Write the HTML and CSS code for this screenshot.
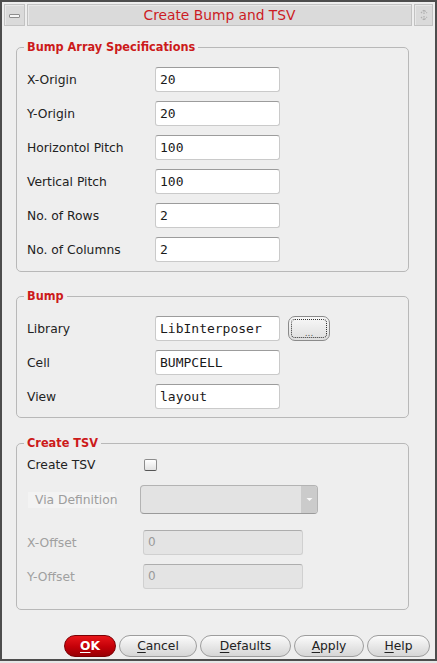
FILE: index.html
```html
<!DOCTYPE html>
<html>
<head>
<meta charset="utf-8">
<link rel="stylesheet" href="styles.css">
</head>
<body>
<div class="window">
  <div class="titlebar">
    <div class="tb-btn tb-left"><span class="min-icon"></span></div>
    <div class="tb-title">Create Bump and TSV</div>
    <div class="tb-btn tb-right">
      <svg width="12" height="14" viewBox="0 0 12 14"><path d="M3 5 L6 2 L9 5 M6 2 V6 M3 9 L6 12 L9 9 M6 12 V8" fill="none" stroke="#b0b0b0" stroke-width="1.2" stroke-dasharray="1.5 1"/></svg>
    </div>
  </div>
  <div class="content">
    <fieldset class="group g1">
      <legend>Bump Array Specifications</legend>
      <div class="form">
        <span class="lbl">X-Origin</span><div class="field">20</div>
        <span class="lbl">Y-Origin</span><div class="field">20</div>
        <span class="lbl">Horizontol Pitch</span><div class="field">100</div>
        <span class="lbl">Vertical Pitch</span><div class="field">100</div>
        <span class="lbl">No. of Rows</span><div class="field">2</div>
        <span class="lbl">No. of Columns</span><div class="field">2</div>
      </div>
    </fieldset>
    <fieldset class="group g2">
      <legend>Bump</legend>
      <div class="form form3">
        <span class="lbl">Library</span><div class="field">LibInterposer</div><button class="browse"><span>...</span></button>
        <span class="lbl">Cell</span><div class="field">BUMPCELL</div><span></span>
        <span class="lbl">View</span><div class="field">layout</div><span></span>
      </div>
    </fieldset>
    <fieldset class="group g3">
      <legend>Create TSV</legend>
      <div class="row r1"><span class="lbl lbl-tsv">Create TSV</span><span class="check"></span></div>
      <div class="row r2"><span class="lbl via">Via Definition</span><div class="combo"><span class="combo-arrow"><svg width="7" height="5" viewBox="0 0 7 5"><path d="M0.5 1 L6.5 1 L3.5 4 Z" fill="#fafafa"/></svg></span></div></div>
      <div class="row r3"><span class="lbl dis">X-Offset</span><div class="field dfield">0</div></div>
      <div class="row r4"><span class="lbl dis">Y-Offset</span><div class="field dfield">0</div></div>
    </fieldset>
    <div class="buttons">
      <button class="btn ok"><u>O</u>K</button>
      <button class="btn cancel"><u>C</u>ancel</button>
      <button class="btn defaults"><u>D</u>efaults</button>
      <button class="btn apply"><u>A</u>pply</button>
      <button class="btn help"><u>H</u>elp</button>
    </div>
  </div>
</div>
</body>
</html>
```

FILE: styles.css
```css
html, body { margin: 0; padding: 0; }
body {
  background: #e6e6e6;
  font-family: "DejaVu Sans", sans-serif;
  font-size: 12.3px;
  color: #222;
}
.window {
  width: 437px;
  height: 661px;
  box-sizing: border-box;
  border: 2px solid #4d4d4d;
  background: #eeeeee;
  padding: 2px 2px 0 2px;
  display: flex;
  flex-direction: column;
}
.titlebar {
  display: flex;
  gap: 2px;
  height: 22px;
}
.tb-btn, .tb-title {
  box-sizing: border-box;
  background: #dadada;
  border: 1px solid #c2c2c2;
  box-shadow: inset 1px 1px 0 #e8e8e8;
}
.tb-left {
  width: 21px;
  display: flex;
  align-items: center;
  justify-content: center;
}
.min-icon {
  width: 11px;
  height: 4px;
  box-sizing: border-box;
  border: 1px solid #8d8d8d;
  border-radius: 1px;
  background: #f6f6f6;
  margin-top: 2px;
}
.tb-title {
  flex: 1;
  text-align: center;
  font-size: 13.8px;
  line-height: 20px;
  color: #cc1a24;
}
.tb-right {
  width: 19px;
  display: flex;
  align-items: center;
  justify-content: center;
}
.content {
  padding: 13px 24px 0 12px;
  display: flex;
  flex-direction: column;
}
.group {
  margin: 0;
  border: 1px solid #b8b8b8;
  border-radius: 5px;
  padding: 12px 9px 9px 10px;
  min-width: 0;
}
.group legend {
  font-family: "DejaVu Sans Condensed", "DejaVu Sans", sans-serif;
  font-stretch: condensed;
  font-weight: bold;
  font-size: 12.6px;
  line-height: 16px;
  color: #cc1a1a;
  padding: 0 3px;
  margin-left: -3px;
}
.g2 { margin-top: 16px; padding-bottom: 8px; }
.g3 { margin-top: 17px; padding: 2px 9px 20px 10px; }
.form {
  display: grid;
  grid-template-columns: 128px 125px;
  row-gap: 9px;
  align-items: center;
}
.form3 { grid-template-columns: 128px 125px 42px; column-gap: 0; }
.lbl { white-space: nowrap; }
.field {
  box-sizing: border-box;
  height: 25px;
  background: #fff;
  border: 1px solid #cacaca;
  border-top-color: #9c9c9c;
  border-radius: 3px;
  font-family: "DejaVu Sans Mono", monospace;
  font-size: 13px;
  line-height: 23px;
  padding-left: 4px;
  color: #1a1a1a;
}
.browse {
  margin-left: 8px;
  width: 42px;
  height: 25px;
  box-sizing: border-box;
  border: 1px solid #8a8a8a;
  border-radius: 7px;
  background: linear-gradient(#f8f8f8, #dedede);
  padding: 2px;
  display: flex;
}
.browse span {
  flex: 1;
  border: 1px dotted #333;
  border-radius: 4px;
  font-family: "DejaVu Sans", sans-serif;
  font-size: 9px;
  color: #555;
  line-height: 26px;
  text-align: center;
  overflow: hidden;
}
.row { display: flex; align-items: center; }
.row .lbl { width: 113px; flex: none; }
.r1 { height: 24px; }
.r2 { margin-top: 8px; height: 29px; }
.r3 { margin-top: 16px; }
.r4 { margin-top: 9px; }
.check {
  margin-left: 4px;
  width: 13px;
  height: 12px;
  box-sizing: border-box;
  border: 1px solid #8c8c8c;
  border-bottom-color: #555;
  border-radius: 2px;
  background: linear-gradient(#ffffff, #e2e2e2);
}
.via {
  margin-left: 1px;
  width: 87px !important;
  height: 16px;
  line-height: 16px;
  background: #f3f3f3;
  padding-left: 7px;
  box-sizing: border-box;
  color: #9d9d9d;
  margin-right: 25px;
}
.combo {
  width: 178px;
  height: 29px;
  box-sizing: border-box;
  border: 1px solid #b3b3b3;
  border-bottom-color: #9a9a9a;
  border-radius: 4px;
  background: #e3e3e3;
  display: flex;
  justify-content: flex-end;
  overflow: hidden;
}
.combo-arrow {
  width: 16px;
  background: #cbcbcb;
  display: flex;
  align-items: center;
  justify-content: center;
}
.dis { color: #a0a0a0; }
.dfield {
  margin-left: 3px;
  width: 160px;
  background: #e4e4e4;
  border-color: #d0d0d0;
  border-top-color: #adadad;
  font-family: "DejaVu Sans", sans-serif;
  font-size: 12px;
  color: #9a9a9a;
}
.buttons {
  margin-top: 25px;
  margin-right: -21px;
  display: flex;
  justify-content: flex-end;
  gap: 3px;
}
.btn {
  height: 22px;
  box-sizing: border-box;
  border: 1px solid #9d9d9d;
  border-radius: 11px;
  background: linear-gradient(#fbfbfb, #e4e4e4 60%, #d6d6d6);
  font-family: "DejaVu Sans", sans-serif;
  font-size: 12.3px;
  color: #222;
  padding: 0;
}
.btn u { text-underline-offset: 2px; }
.ok {
  width: 52px;
  background: linear-gradient(#e8161a, #c30008 55%, #980006);
  border-color: #7a0004;
  color: #fff;
  font-weight: bold;
}
.cancel { width: 78px; }
.defaults { width: 91px; }
.apply { width: 70px; }
.help { width: 63px; }
```
